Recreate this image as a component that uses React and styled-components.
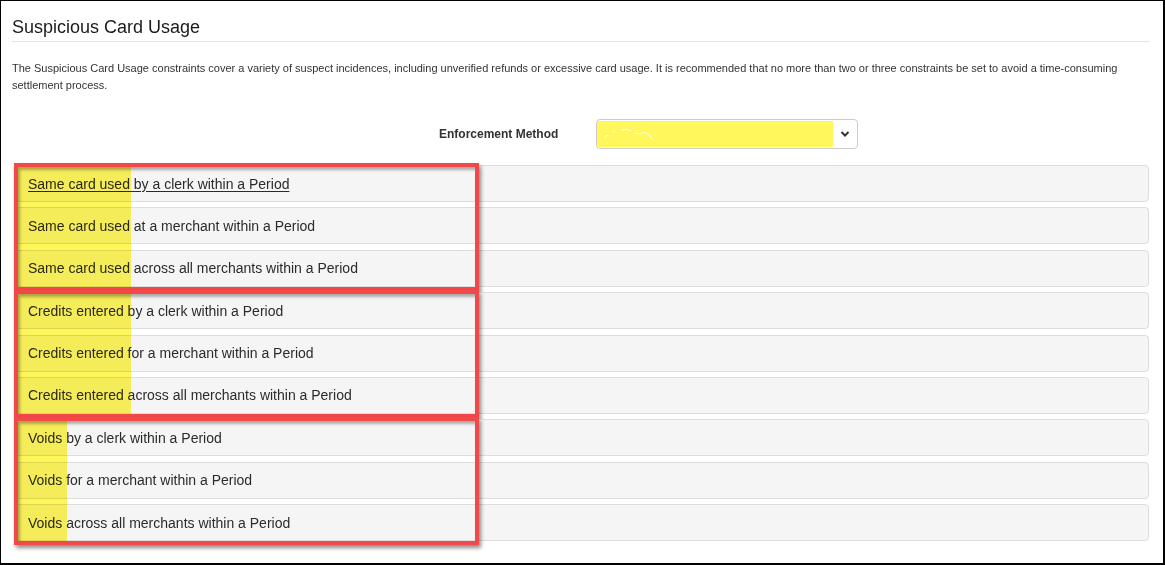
import React from "react";
import styled, { createGlobalStyle } from "styled-components";

const Global = createGlobalStyle`
  html, body { margin: 0; padding: 0; background: #fff; }
  body { font-family: "Liberation Sans", Arial, sans-serif; }
`;

const Frame = styled.div`
  width: 1165px;
  height: 565px;
  box-sizing: border-box;
  border: 1px solid #000;
  border-right-width: 2px;
  border-bottom-width: 2px;
  padding: 0 13px 0 11px;
  overflow: hidden;
  background: #fff;
`;

const Title = styled.h3`
  margin: 16px 0 0;
  padding-bottom: 4px;
  border-bottom: 1px solid #e5e5e5;
  font-size: 18px;
  line-height: 20px;
  font-weight: normal;
  color: #1a1a1a;
`;

const Description = styled.p`
  margin: 18px 0 0;
  font-size: 11px;
  line-height: 17px;
  color: #333;
`;

const FormRow = styled.div`
  margin-top: 25px;
  height: 30px;
  display: flex;
  align-items: center;
  padding-left: 427px;
`;

const Label = styled.label`
  width: 157px;
  font-size: 12px;
  font-weight: bold;
  color: #333;
`;

const Select = styled.div`
  position: relative;
  width: 262px;
  height: 30px;
  box-sizing: border-box;
  border: 1px solid #ccc;
  border-radius: 4px;
  padding: 1px 0;
  display: flex;
  align-items: stretch;
  background: #fff;
`;

const Redacted = styled.div`
  width: 236px;
  background: #fff75c;
  display: flex;
  align-items: center;
  padding-left: 4px;
`;

const Chevron = styled.div`
  margin-left: auto;
  width: 24px;
  display: flex;
  align-items: center;
  justify-content: center;
`;

const List = styled.div`
  margin-top: 16px;
  padding: 0 1px 0 3px;
  display: flex;
  flex-direction: column;
  gap: 5.375px;
`;

const Group = styled.div`
  position: relative;
  display: flex;
  flex-direction: column;
  gap: 5.375px;
`;

const Row = styled.div`
  height: 37px;
  box-sizing: border-box;
  border: 1px solid #ddd;
  border-radius: 4px;
  background: #f5f5f5;
  display: flex;
  align-items: center;
  padding-left: 12px;
  font-size: 14px;
  color: #2b2b2b;
`;

const RowText = styled.span`
  text-decoration: ${(p) => (p.$active ? "underline" : "none")};
  text-underline-offset: 2px;
`;

const Annotation = styled.div`
  position: absolute;
  top: -2px;
  bottom: -4px;
  left: -1px;
  width: 465px;
  box-sizing: border-box;
  border: 4px solid #f24848;
  box-shadow: 2px 3px 4px rgba(0, 0, 0, 0.45), inset 2px 3px 3px rgba(0, 0, 0, 0.3);
  pointer-events: none;
`;

const Highlight = styled.div`
  position: absolute;
  top: 0;
  bottom: 0;
  left: 0;
  width: ${(p) => p.$width}px;
  background: #fff65c;
  mix-blend-mode: multiply;
`;

const groups = [
  {
    hl: 113,
    rows: [
      "Same card used by a clerk within a Period",
      "Same card used at a merchant within a Period",
      "Same card used across all merchants within a Period",
    ],
  },
  {
    hl: 113,
    rows: [
      "Credits entered by a clerk within a Period",
      "Credits entered for a merchant within a Period",
      "Credits entered across all merchants within a Period",
    ],
  },
  {
    hl: 49,
    rows: [
      "Voids by a clerk within a Period",
      "Voids for a merchant within a Period",
      "Voids across all merchants within a Period",
    ],
  },
];

export default function App() {
  return (
    <>
      <Global />
      <Frame>
        <Title>Suspicious Card Usage</Title>
        <Description>
          The Suspicious Card Usage constraints cover a variety of suspect incidences, including unverified refunds or
          excessive card usage. It is recommended that no more than two or three constraints be set to avoid a
          time-consuming settlement process.
        </Description>
        <FormRow>
          <Label>Enforcement Method</Label>
          <Select>
            <Redacted>
              <svg width="70" height="20" viewBox="0 0 70 20">
                <path
                  d="M3 14 q2 -4 5 -2 M12 8 l2 -1 M20 6 q6 -2 10 1 M34 9 q6 2 10 -1 q5 3 8 8"
                  fill="none"
                  stroke="#fff"
                  strokeWidth="1"
                  opacity="0.9"
                />
              </svg>
            </Redacted>
            <Chevron>
              <svg width="10" height="8" viewBox="0 0 10 8">
                <polyline points="1.5,2 5,5.5 8.5,2" fill="none" stroke="#333" strokeWidth="2" />
              </svg>
            </Chevron>
          </Select>
        </FormRow>
        <List>
          {groups.map((g, gi) => (
            <Group key={gi}>
              {g.rows.map((r, ri) => (
                <Row key={ri}>
                  <RowText $active={gi === 0 && ri === 0}>{r}</RowText>
                </Row>
              ))}
              <Annotation>
                <Highlight $width={g.hl} />
              </Annotation>
            </Group>
          ))}
        </List>
      </Frame>
    </>
  );
}
